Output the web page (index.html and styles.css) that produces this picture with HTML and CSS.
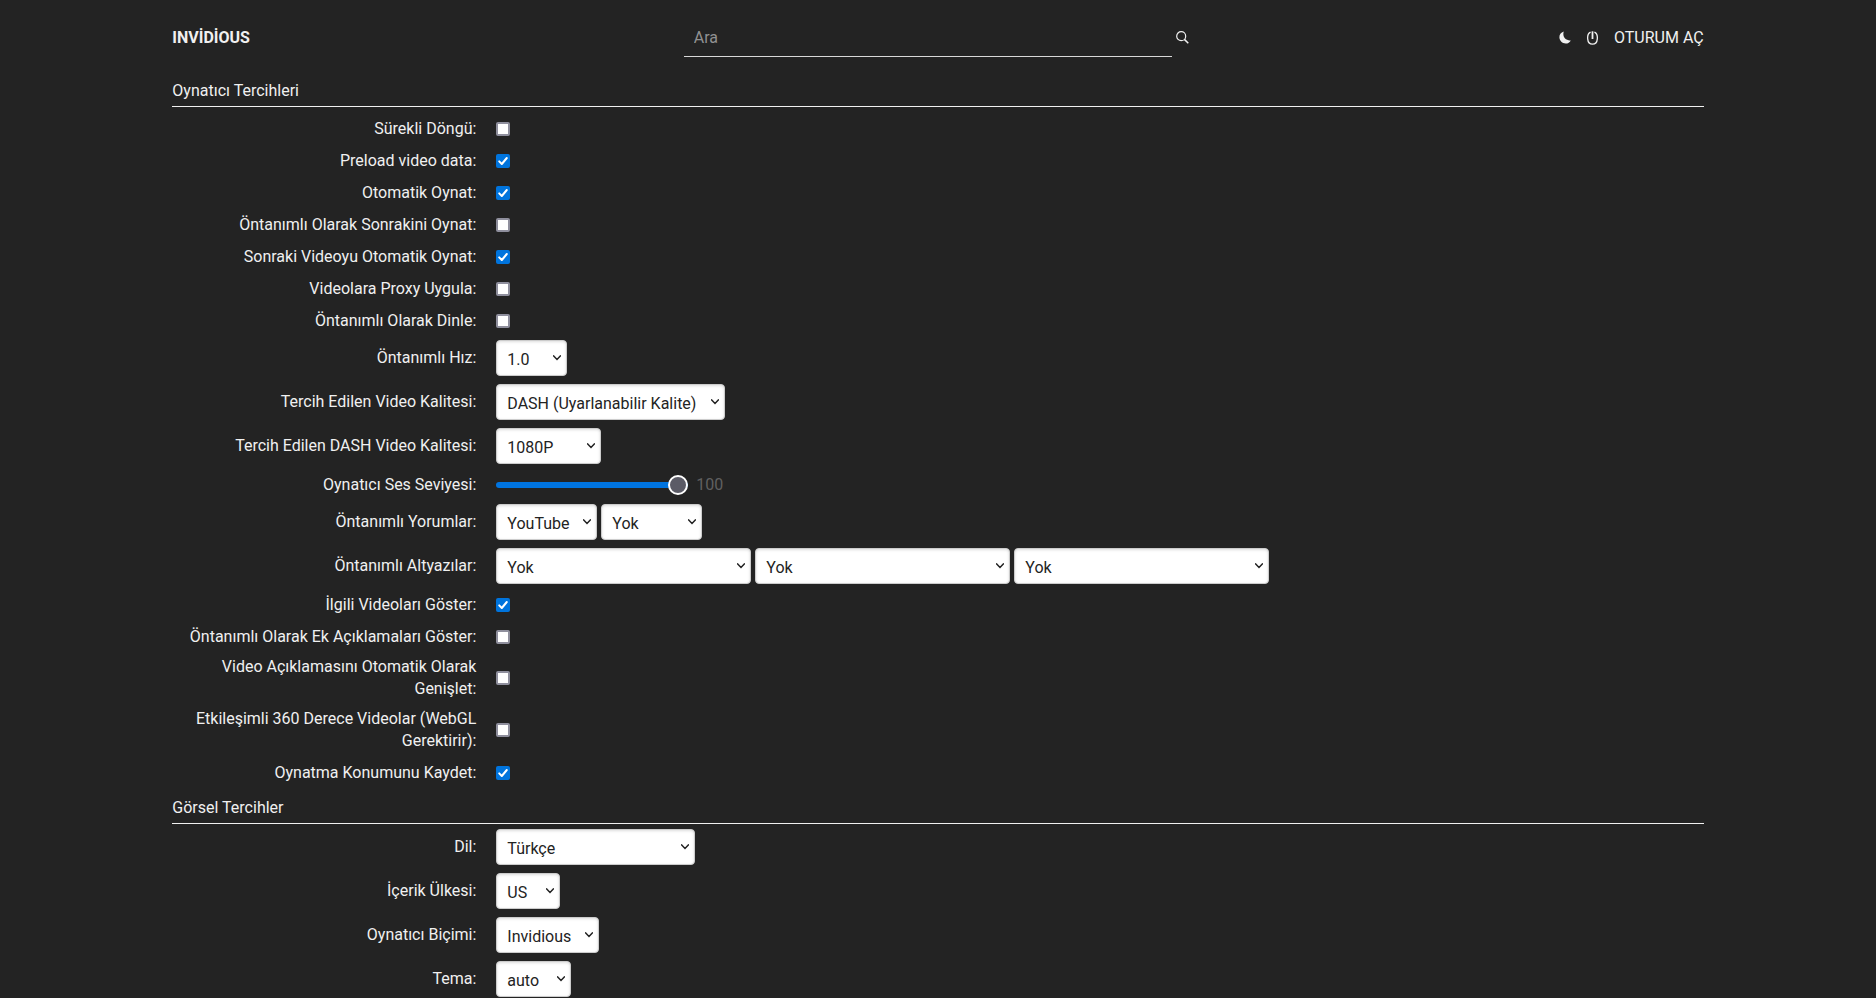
FILE: index.html
```html
<!DOCTYPE html>
<html lang="tr">
<head>
    <meta charset="UTF-8">
    <meta name="viewport" content="width=device-width, initial-scale=1.0">
    <title>Tercihler - Invidious</title>
    <link rel="stylesheet" href="styles.css">
</head>
<body>
    <div class="container">
        <header class="navbar">
            <a class="index-link" href="/">Invidious</a>

            <form class="searchbar" action="/search">
                <input type="search" name="q" placeholder="Ara" aria-label="Ara">
                <button type="submit" aria-label="Ara">
                    <svg width="13" height="13" viewBox="0 0 13 13" fill="none" stroke="currentColor">
                        <circle cx="5.2" cy="5.2" r="4.5" stroke-width="1.2"/>
                        <path d="M8.4 8.4 L12.3 12.3" stroke-width="1.5"/>
                    </svg>
                </button>
            </form>

            <nav class="user-field">
                <a href="/toggle_theme" aria-label="Tema">
                    <svg width="12" height="13" viewBox="0 0 12 13" fill="currentColor">
                        <path d="M4.8 0.4 C1.9 1.2 0.2 3.6 0.4 6.6 C0.6 10 3.3 12.5 6.7 12.5 C9 12.5 10.8 11.4 11.8 9.4 C10.8 9.6 9.4 9.4 8.2 8.8 C4.9 7.3 3.6 3.9 4.8 0.4 Z"/>
                    </svg>
                </a>
                <a href="/preferences" aria-label="Tercihler">
                    <svg width="11" height="14" viewBox="0 0 11 14" fill="none" stroke="currentColor">
                        <path d="M3.6 1.2 C-0.6 3 -0.6 13.2 5.5 13.2 C11.6 13.2 11.6 3 7.4 1.2" stroke-width="1.3"/>
                        <path d="M5.5 0.3 V8" stroke-width="1.8"/>
                    </svg>
                </a>
                <a href="/login">Oturum aç</a>
            </nav>
        </header>

        <form class="preferences" action="/preferences" method="post">
            <fieldset>
                <legend>Oynatıcı Tercihleri</legend>

                <div class="control-group check">
                    <label for="video_loop">Sürekli Döngü:</label>
                    <input type="checkbox" id="video_loop">
                </div>
                <div class="control-group check">
                    <label for="preload">Preload video data:</label>
                    <input type="checkbox" id="preload" checked>
                </div>
                <div class="control-group check">
                    <label for="autoplay">Otomatik Oynat:</label>
                    <input type="checkbox" id="autoplay" checked>
                </div>
                <div class="control-group check">
                    <label for="continue">Öntanımlı Olarak Sonrakini Oynat:</label>
                    <input type="checkbox" id="continue">
                </div>
                <div class="control-group check">
                    <label for="continue_autoplay">Sonraki Videoyu Otomatik Oynat:</label>
                    <input type="checkbox" id="continue_autoplay" checked>
                </div>
                <div class="control-group check">
                    <label for="local">Videolara Proxy Uygula:</label>
                    <input type="checkbox" id="local">
                </div>
                <div class="control-group check">
                    <label for="listen">Öntanımlı Olarak Dinle:</label>
                    <input type="checkbox" id="listen">
                </div>
                <div class="control-group">
                    <label for="speed">Öntanımlı Hız:</label>
                    <select id="speed" class="w-speed"><option>1.0</option></select>
                </div>
                <div class="control-group">
                    <label for="quality">Tercih Edilen Video Kalitesi:</label>
                    <select id="quality" class="w-quality"><option>DASH (Uyarlanabilir Kalite)</option></select>
                </div>
                <div class="control-group">
                    <label for="quality_dash">Tercih Edilen DASH Video Kalitesi:</label>
                    <select id="quality_dash" class="w-dash"><option>1080P</option></select>
                </div>
                <div class="control-group check">
                    <label for="volume">Oynatıcı Ses Seviyesi:</label>
                    <input type="range" id="volume" min="0" max="100" step="5" value="100">
                    <span class="volume-value">100</span>
                </div>
                <div class="control-group">
                    <label for="comments_0">Öntanımlı Yorumlar:</label>
                    <select id="comments_0" class="w-comments"><option>YouTube</option></select>
                    <select id="comments_1" class="w-comments" aria-label="Yorumlar 2"><option>Yok</option></select>
                </div>
                <div class="control-group">
                    <label for="captions_0">Öntanımlı Altyazılar:</label>
                    <select id="captions_0" class="w-captions"><option>Yok</option></select>
                    <select id="captions_1" class="w-captions" aria-label="Altyazılar 2"><option>Yok</option></select>
                    <select id="captions_2" class="w-captions" aria-label="Altyazılar 3"><option>Yok</option></select>
                </div>
                <div class="control-group check">
                    <label for="related_videos">İlgili Videoları Göster:</label>
                    <input type="checkbox" id="related_videos" checked>
                </div>
                <div class="control-group check">
                    <label for="annotations">Öntanımlı Olarak Ek Açıklamaları Göster:</label>
                    <input type="checkbox" id="annotations">
                </div>
                <div class="control-group">
                    <label for="extend_desc">Video Açıklamasını Otomatik Olarak Genişlet:</label>
                    <input type="checkbox" id="extend_desc">
                </div>
                <div class="control-group">
                    <label for="vr_mode">Etkileşimli 360 Derece Videolar (WebGL Gerektirir):</label>
                    <input type="checkbox" id="vr_mode">
                </div>
                <div class="control-group check">
                    <label for="save_player_pos">Oynatma Konumunu Kaydet:</label>
                    <input type="checkbox" id="save_player_pos" checked>
                </div>
            </fieldset>

            <fieldset>
                <legend>Görsel Tercihler</legend>

                <div class="control-group">
                    <label for="locale">Dil:</label>
                    <select id="locale" class="w-locale"><option>Türkçe</option></select>
                </div>
                <div class="control-group">
                    <label for="region">İçerik Ülkesi:</label>
                    <select id="region" class="w-region"><option>US</option></select>
                </div>
                <div class="control-group">
                    <label for="player_style">Oynatıcı Biçimi:</label>
                    <select id="player_style" class="w-style"><option>Invidious</option></select>
                </div>
                <div class="control-group">
                    <label for="dark_mode">Tema:</label>
                    <select id="dark_mode" class="w-theme"><option>auto</option></select>
                </div>
            </fieldset>
        </form>
    </div>
</body>
</html>
```
FILE: styles.css
```css
* {
    box-sizing: border-box;
}
body {
    margin: 0;
    background-color: #232323;
    color: #f0f0f0;
    font-family: Roboto, "Noto Sans", sans-serif;
    font-size: 16px;
    line-height: 22px;
}
.container {
    width: 83.333%;
    margin: 0 auto;
    padding: 0 16px;
}
a {
    color: inherit;
    text-decoration: none;
}

/* Navbar */
.navbar {
    display: grid;
    grid-template-columns: 1fr 1fr 1fr;
    align-items: center;
    padding-top: 18px;
    margin-bottom: 23px;
}
.index-link {
    font-weight: bold;
    text-transform: uppercase;
}
.searchbar {
    display: flex;
    padding-left: 1px;
}
.searchbar input {
    flex: 1;
    height: 39px;
    padding: 0 10px;
    border: none;
    border-bottom: 1px solid #d8d8d8;
    border-radius: 0;
    outline: none;
    background: none;
    color: inherit;
    font: inherit;
}
.searchbar input::placeholder {
    color: #919191;
}
.searchbar button {
    display: flex;
    align-items: center;
    width: 21px;
    padding: 0 0 0 4px;
    border: none;
    background: none;
    color: inherit;
    cursor: pointer;
}
.user-field {
    display: flex;
    justify-content: flex-end;
    gap: 16px;
    text-transform: uppercase;
}
.user-field a {
    display: flex;
    align-items: center;
}

/* Preferences */
fieldset {
    display: flow-root;
    min-width: 0;
    margin: 0 0 13px;
    padding: 0;
    border: none;
}
legend {
    display: block;
    width: 100%;
    margin-bottom: 5px;
    padding: 0 0 4px;
    border-bottom: 1px solid #f0f0f0;
}
.control-group {
    display: flex;
    align-items: center;
    gap: 4px;
    margin-bottom: 8px;
}
.control-group:last-child {
    margin-bottom: 0;
}
.check {
    height: 24px;
    padding-top: 2px;
}
legend + .check {
    margin-top: 4px;
}
.control-group label {
    width: 304px;
    margin-right: 16px;
    text-align: right;
}
input[type="checkbox"] {
    appearance: none;
    width: 14px;
    height: 14px;
    margin: 0;
    border: 2px solid #8f8f9d;
    border-radius: 2px;
    background: #fff;
}
input[type="checkbox"]:checked {
    border: none;
    background: #0074dd url("data:image/svg+xml,%3Csvg xmlns='http://www.w3.org/2000/svg' viewBox='0 0 14 14'%3E%3Cpath d='M3.2 7.4 L5.8 10 L10.8 4' fill='none' stroke='white' stroke-width='2' stroke-linecap='round' stroke-linejoin='round'/%3E%3C/svg%3E");
}
select {
    appearance: none;
    height: 36px;
    padding: 4px 10px 0;
    border: 1px solid #ccc;
    border-radius: 4px;
    background: #fff url("data:image/svg+xml,%3Csvg xmlns='http://www.w3.org/2000/svg' width='8' height='6' viewBox='0 0 8 6'%3E%3Cpath d='M0.7 0.9 L4 4.4 L7.3 0.9' fill='none' stroke='%23222' stroke-width='1.5' stroke-linecap='round'/%3E%3C/svg%3E") no-repeat right 5px center;
    box-shadow: inset 0 1px 3px #ddd;
    color: #232323;
    font: inherit;
}
.w-speed {
    width: 71px;
}
.w-quality {
    width: 229px;
}
.w-dash {
    width: 105px;
}
.w-comments {
    width: 101px;
}
.w-captions {
    width: 255px;
}
.w-locale {
    width: 199px;
}
.w-region {
    width: 64px;
}
.w-style {
    width: 103px;
}
.w-theme {
    width: 75px;
}
input[type="range"] {
    appearance: none;
    width: 192px;
    height: 6px;
    margin: 0;
    border-radius: 3px;
    background: #0074e0;
}
input[type="range"]::-webkit-slider-thumb {
    appearance: none;
    width: 20px;
    height: 20px;
    border: 2px solid #fff;
    border-radius: 50%;
    background: #5b5b66;
}
.volume-value {
    margin-left: 4px;
    color: #606060;
}
```
